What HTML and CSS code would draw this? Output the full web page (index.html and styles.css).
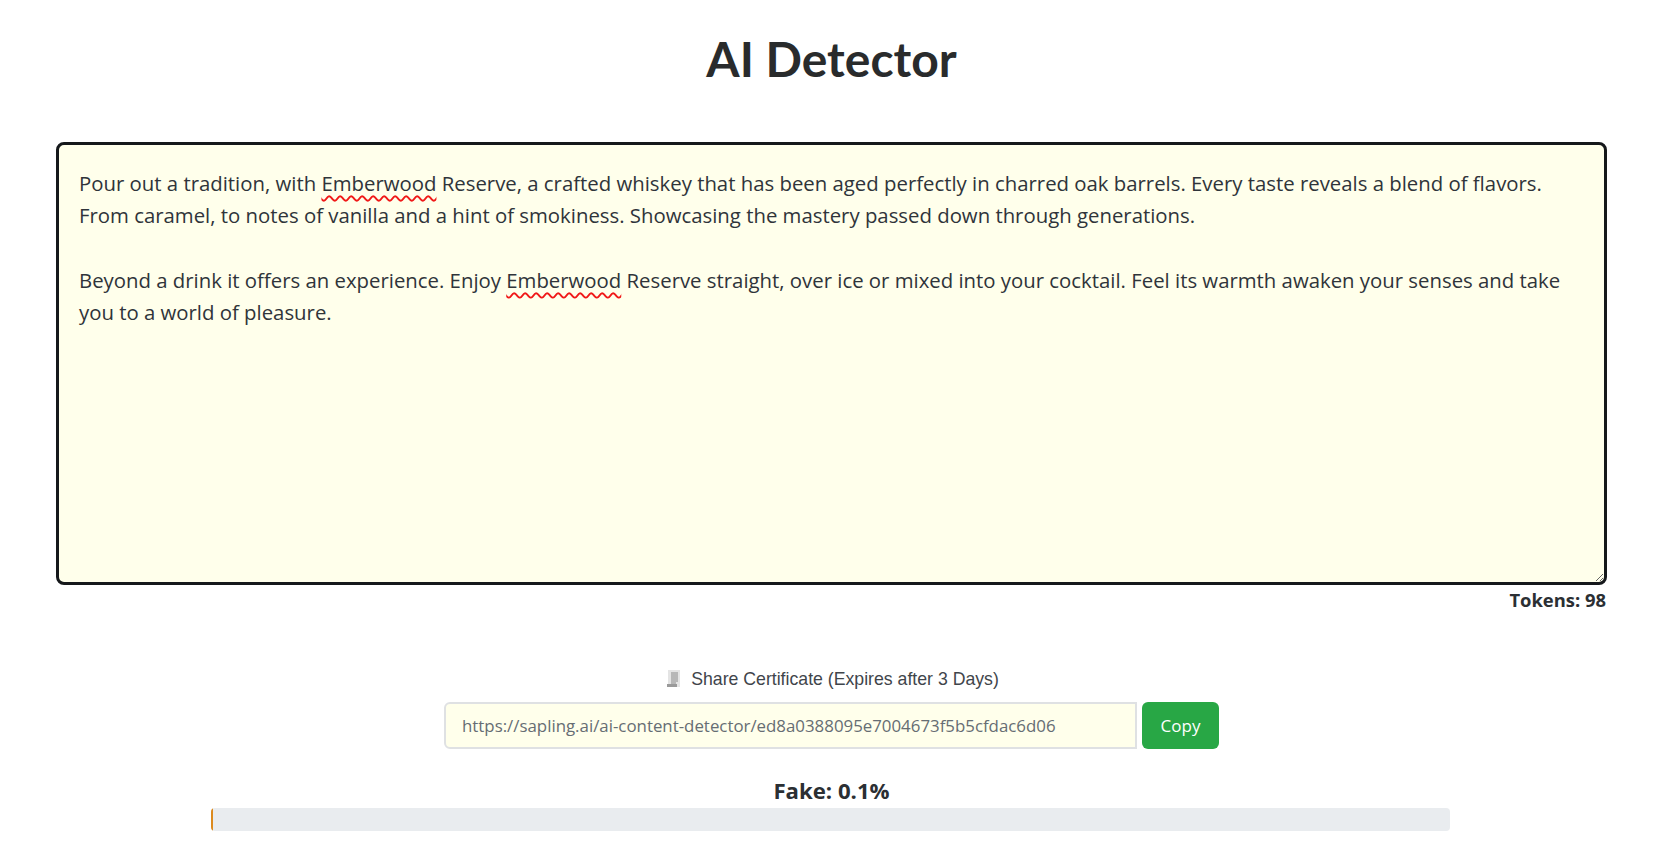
FILE: index.html
```html
<!DOCTYPE html>
<html lang="en">
<head>
<meta charset="utf-8">
<title>AI Detector</title>
<link rel="stylesheet" href="styles.css">
</head>
<body>
<main class="page">
  <h1 class="title">AI Detector</h1>
  <section class="editor-wrap">
    <div class="editor">
      <p>Pour out a tradition, with <span class="misspelt">Emberwood</span> Reserve, a crafted whiskey that has been aged perfectly in charred oak barrels. Every taste reveals a blend of flavors. From caramel, to notes of vanilla and a hint of smokiness. Showcasing the mastery passed down through generations.</p>
      <p>Beyond a drink it offers an experience. Enjoy <span class="misspelt">Emberwood</span> Reserve straight, over ice or mixed into your cocktail. Feel its warmth awaken your senses and take you to a world of pleasure.</p>
    </div>
    <div class="tokens">Tokens: 98</div>
  </section>
  <section class="share">
    <div class="share-label">
      <svg class="receipt" viewBox="0 0 13 18" width="13" height="18" aria-hidden="true">
        <path d="M1 0h12v17H1z" fill="#e4e4e4"/>
        <path d="M4 3h7M4 5h7M4 7h7M4 9h7M4 11h7M4 13h5" stroke="#8a8a8a" stroke-width="1"/>
        <path d="M0 14h10v3H0z" fill="#9a9a9a"/>
      </svg>
      <span>Share Certificate (Expires after 3 Days)</span>
    </div>
    <div class="share-row">
      <div class="share-input">https://sapling.ai/ai-content-detector/ed8a0388095e7004673f5b5cfdac6d06</div>
      <div class="copy">Copy</div>
    </div>
  </section>
  <section class="result">
    <div class="fake">Fake: 0.1%</div>
    <div class="bar"><div class="bar-fill"></div></div>
  </section>
</main>
</body>
</html>
```
FILE: styles.css
```css
* { box-sizing: border-box; }
html, body { margin: 0; padding: 0; background: #fff; }
body { font-family: "Open Sans", "Liberation Sans", sans-serif; color: #2b2f33; }
.page { padding: 0 62px 0 56px; display: flex; flex-direction: column; }
.title { margin: 30px 0 0; height: 58px; text-align: center; font-family: Lato, sans-serif; font-weight: 700; font-size: 48px; line-height: 58px; color: #292b2c; }
.editor-wrap { margin-top: 54px; }
.editor { height: 443px; border: 3px solid #15181b; border-radius: 8px; background: #ffffeb; padding: 22px 20px; font-size: 20.35px; line-height: 32.25px; color: #2f343a; resize: vertical; overflow: auto; }
.editor p { margin: 0 0 32.25px; }
.misspelt { text-decoration: underline wavy #f01818 1.5px; text-underline-offset: 3.5px; }
.tokens { text-align: right; font-weight: 700; font-size: 18.4px; line-height: 26px; margin: 2px 1px 0 0; }
.share { margin-top: 54px; display: flex; flex-direction: column; align-items: center; }
.share-label { display: flex; align-items: center; gap: 11px; margin-left: 3px; font-family: "Liberation Sans", sans-serif; font-size: 17.7px; line-height: 24px; color: #3f454b; }
.receipt { display: block; }
.share-row { display: flex; gap: 5px; margin-top: 11px; }
.share-input { width: 693px; height: 47px; border: 2px solid #dfe1e3; border-radius: 6px 0 0 6px; background: #ffffeb; padding: 0 16px; font-size: 16.85px; line-height: 44px; color: #666d73; white-space: nowrap; }
.copy { width: 77px; height: 47px; border-radius: 6px; background: #28a745; color: #fff; font-size: 17px; line-height: 47px; text-align: center; }
.result { margin-top: 28px; display: flex; flex-direction: column; align-items: center; }
.fake { font-weight: 700; font-size: 22.2px; line-height: 28px; }
.bar { width: 1239px; height: 23px; background: #e9ecef; border-radius: 4px; overflow: hidden; margin: 3px 2px 0 0; }
.bar-fill { width: 2px; height: 100%; background: #dc8a1e; }
```
